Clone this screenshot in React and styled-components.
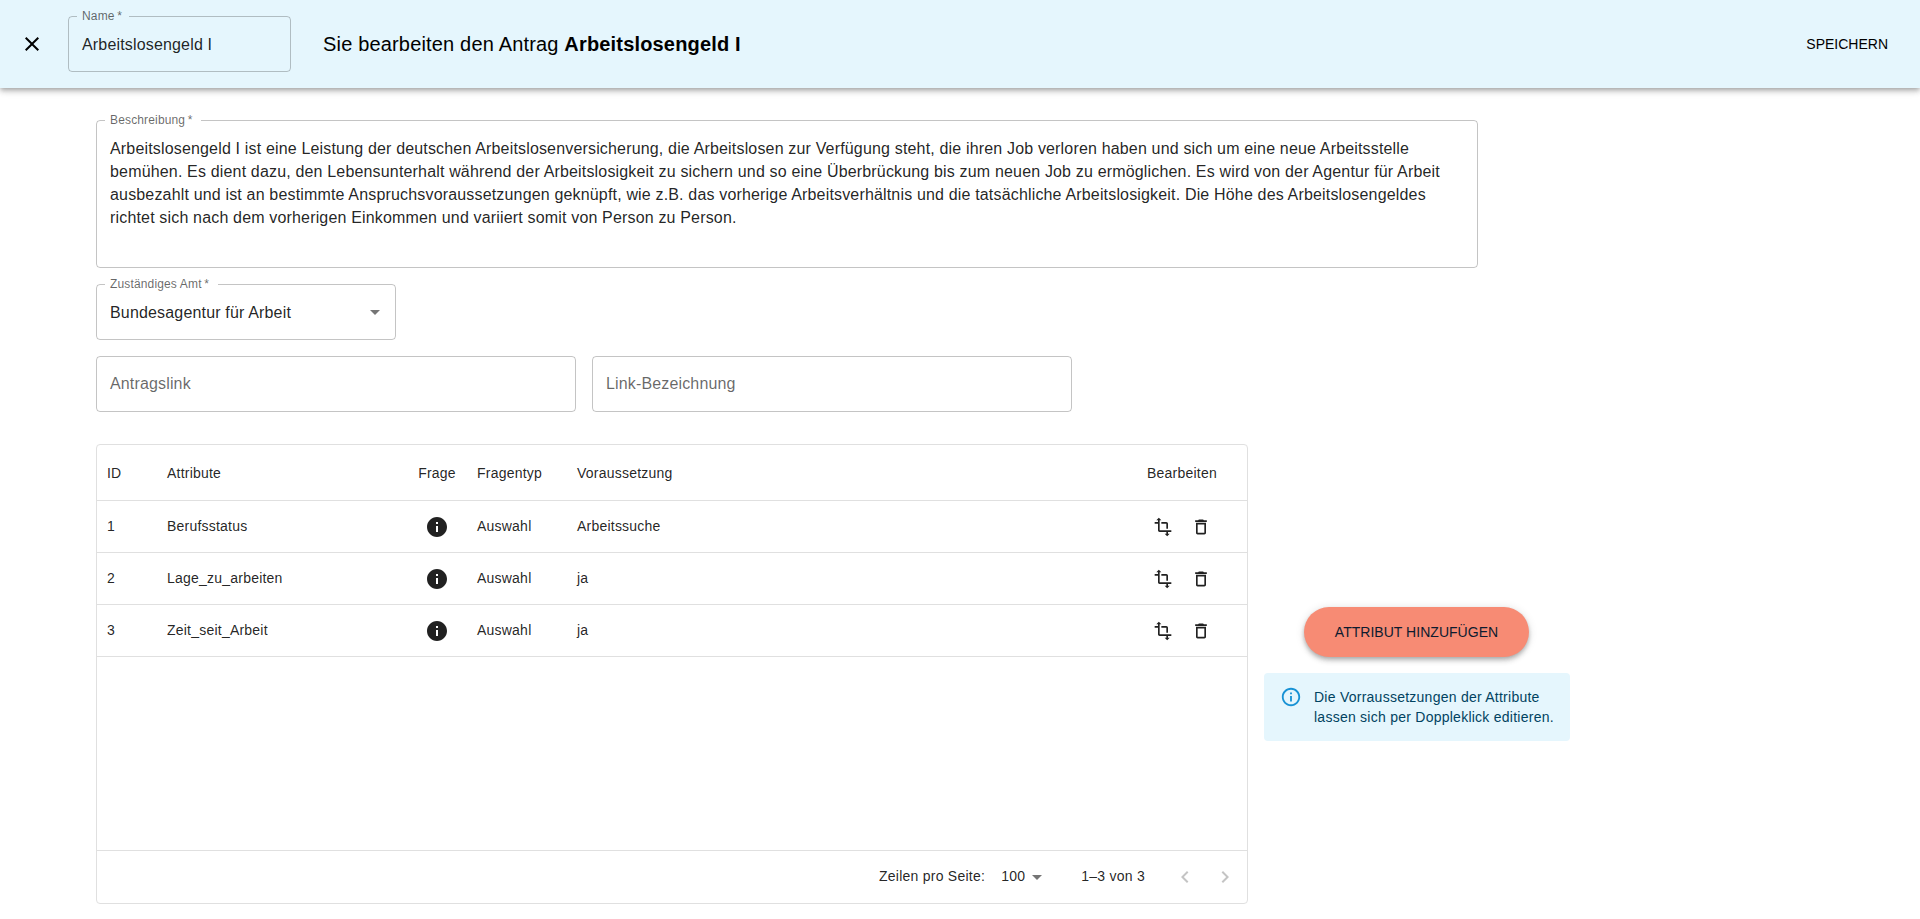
import React from 'react';
import styled, { createGlobalStyle } from 'styled-components';
import {
  MdClose,
  MdInfo,
  MdInfoOutline,
  MdTransform,
  MdDeleteOutline,
  MdArrowDropDown,
  MdKeyboardArrowLeft,
  MdKeyboardArrowRight,
} from 'react-icons/md';

const GlobalStyle = createGlobalStyle`
  * { box-sizing: border-box; }
  body {
    margin: 0;
    background: #fff;
    color: rgba(0, 0, 0, 0.87);
    font-family: "Liberation Sans", Arial, sans-serif;
    font-size: 14px;
  }
  svg { display: block; flex: none; }
`;

const Page = styled.div`
  min-height: 919px;
`;

const AppBar = styled.header`
  display: flex;
  align-items: center;
  height: 88px;
  padding: 0 24px 0 12px;
  background: #e5f6fd;
  color: #000;
  box-shadow: 0 2px 4px -1px rgba(0, 0, 0, 0.2), 0 4px 5px 0 rgba(0, 0, 0, 0.14),
    0 1px 10px 0 rgba(0, 0, 0, 0.12);
`;

const IconButton = styled.button`
  display: flex;
  align-items: center;
  justify-content: center;
  width: ${(p) => p.$size}px;
  height: ${(p) => p.$size}px;
  padding: 0;
  border: 0;
  border-radius: 50%;
  background: none;
  color: inherit;
  opacity: ${(p) => (p.disabled ? 0.26 : 1)};
`;

const Title = styled.h1`
  flex: 1;
  margin: 0 0 0 32px;
  font-size: 20px;
  font-weight: 400;
  line-height: 32px;
  letter-spacing: 0.172px;
`;

const SaveButton = styled.button`
  padding: 6px 8px;
  border: 0;
  background: none;
  color: #000;
  font: 14px/24.5px "Liberation Sans", Arial, sans-serif;
  letter-spacing: 0;
  text-transform: uppercase;
`;

/* Outlined box; the legend interrupts the top border around its centre line. */
const Outline = styled.fieldset`
  width: ${(p) => p.$width};
  height: ${(p) => p.$height + 5}px;
  min-width: 0;
  margin: -5px 0 0;
  padding: 0;
  border: 1px solid rgba(0, 0, 0, 0.23);
  border-radius: 4px;
  color: rgba(0, 0, 0, 0.87);
  font-size: 16px;
  line-height: 23px;
  letter-spacing: 0.167px;
`;

const Legend = styled.legend`
  width: ${(p) => p.$notch}px;
  height: 11px;
  margin-left: 8px;
  padding: 0 0 0 5px;
  color: rgba(0, 0, 0, 0.6);
  font-size: 12px;
  line-height: 11px;
  letter-spacing: 0.15px;
  white-space: nowrap;
`;

const Value = styled.div`
  display: flex;
  align-items: center;
  justify-content: space-between;
  padding: 10.5px 8px 0 13px;

  svg { margin: -1px 0 0; }
`;

const Paragraph = styled.p`
  margin: 0;
  padding: 10.5px 13px 0;
`;

const EmptyField = styled.div`
  width: 480px;
  height: 56px;
  padding: 15px 13px;
  border: 1px solid rgba(0, 0, 0, 0.23);
  border-radius: 4px;
  color: rgba(0, 0, 0, 0.6);
  font-size: 16px;
  line-height: 23px;
  letter-spacing: 0.00938em;
`;

const NameSlot = styled.div`
  margin-left: 16px;
`;

const Main = styled.main`
  display: flex;
  flex-direction: column;
  gap: 16px;
  padding: 32px 96px 0;
`;

const FieldRow = styled.div`
  display: flex;
  gap: 16px;
`;

const TableArea = styled.section`
  display: flex;
  align-items: center;
  gap: 16px;
  margin-top: 16px;
`;

const Grid = styled.div`
  display: flex;
  flex-direction: column;
  width: 1152px;
  height: 460px;
  border: 1px solid #e0e0e0;
  border-radius: 4px;
  line-height: 20px;
  letter-spacing: 0.22px;
`;

const Row = styled.div`
  display: grid;
  grid-template-columns: 60px 250px 60px 100px 570px 90px;
  align-items: center;
  height: ${(p) => (p.$header ? 56 : 52)}px;
  border-bottom: 1px solid #e0e0e0;
`;

const Cell = styled.div`
  display: flex;
  align-items: center;
  justify-content: ${(p) => (p.$center ? 'center' : 'flex-start')};
  gap: 8px;
  padding: ${(p) => (p.$center ? 0 : '0 10px')};
`;

const TextCell = styled(Cell)`
  padding-bottom: 2px;
`;

const Footer = styled.div`
  display: flex;
  align-items: center;
  justify-content: flex-end;
  height: 53px;
  margin-top: auto;
  padding-right: 2px;
  border-top: 1px solid #e0e0e0;
  letter-spacing: 0.25px;

  > span { padding-bottom: 2px; }
`;

const PageSize = styled.div`
  display: flex;
  align-items: center;
  margin: 0 32px 0 16px;

  > span { padding-bottom: 2px; }
  svg { color: rgba(0, 0, 0, 0.54); }
`;

const Pager = styled.div`
  display: flex;
  margin-left: 20px;
`;

const Side = styled.aside`
  display: flex;
  flex-direction: column;
  align-items: center;
  gap: 16px;
`;

const AddButton = styled.button`
  width: 225px;
  height: 50px;
  margin-right: 1px;
  padding: 0;
  border: 0;
  border-radius: 25px;
  background: #f78b74;
  color: #0d1b2f;
  font: 14px/24.5px "Liberation Sans", Arial, sans-serif;
  letter-spacing: 0.03px;
  text-transform: uppercase;
  box-shadow: 0 2px 4px -1px rgba(0, 0, 0, 0.2), 0 4px 5px 0 rgba(0, 0, 0, 0.14),
    0 1px 10px 0 rgba(0, 0, 0, 0.12);
`;

const Alert = styled.div`
  display: flex;
  width: 306px;
  padding: 14px 16px;
  border-radius: 4px;
  background: #e5f6fd;
  color: #014361;
  line-height: 20px;
  letter-spacing: 0.25px;
  white-space: nowrap;

  svg { margin: -1px 12px 0 0; color: #0288d1; opacity: 0.9; }
`;

const rows = [
  { id: 1, attribute: 'Berufsstatus', type: 'Auswahl', condition: 'Arbeitssuche' },
  { id: 2, attribute: 'Lage_zu_arbeiten', type: 'Auswahl', condition: 'ja' },
  { id: 3, attribute: 'Zeit_seit_Arbeit', type: 'Auswahl', condition: 'ja' },
];

export default function App() {
  return (
    <Page>
      <GlobalStyle />
      <AppBar>
        <IconButton $size={40} aria-label="Schließen"><MdClose size={24} /></IconButton>
        <NameSlot>
          <Outline $width="223px" $height={56}>
            <Legend $notch={52}>Name{'\u2009'}*</Legend>
            <Value>Arbeitslosengeld I</Value>
          </Outline>
        </NameSlot>
        <Title>Sie bearbeiten den Antrag <b>Arbeitslosengeld I</b></Title>
        <SaveButton>Speichern</SaveButton>
      </AppBar>
      <Main>
        <Outline $width="1382px" $height={148}>
          <Legend $notch={96}>Beschreibung{'\u2009'}*</Legend>
          <Paragraph>
            Arbeitslosengeld I ist eine Leistung der deutschen Arbeitslosenversicherung, die
            Arbeitslosen zur Verfügung steht, die ihren Job verloren haben und sich um eine neue
            Arbeitsstelle bemühen. Es dient dazu, den Lebensunterhalt während der Arbeitslosigkeit
            zu sichern und so eine Überbrückung bis zum neuen Job zu ermöglichen. Es wird von der
            Agentur für Arbeit ausbezahlt und ist an bestimmte Anspruchsvoraussetzungen geknüpft,
            wie z.B. das vorherige Arbeitsverhältnis und die tatsächliche Arbeitslosigkeit. Die
            Höhe des Arbeitslosengeldes richtet sich nach dem vorherigen Einkommen und variiert
            somit von Person zu Person.
          </Paragraph>
        </Outline>
        <Outline $width="300px" $height={56}>
          <Legend $notch={113}>Zuständiges Amt{'\u2009'}*</Legend>
          <Value>
            Bundesagentur für Arbeit
            <MdArrowDropDown size={24} color="rgba(0,0,0,0.54)" />
          </Value>
        </Outline>
        <FieldRow>
          <EmptyField>Antragslink</EmptyField>
          <EmptyField>Link-Bezeichnung</EmptyField>
        </FieldRow>
        <TableArea>
          <Grid>
            <Row $header>
              <Cell>ID</Cell>
              <Cell>Attribute</Cell>
              <Cell $center>Frage</Cell>
              <Cell>Fragentyp</Cell>
              <Cell>Voraussetzung</Cell>
              <Cell $center>Bearbeiten</Cell>
            </Row>
            {rows.map((row) => (
              <Row key={row.id}>
                <TextCell>{row.id}</TextCell>
                <TextCell>{row.attribute}</TextCell>
                <Cell $center><MdInfo size={24} /></Cell>
                <TextCell>{row.type}</TextCell>
                <TextCell>{row.condition}</TextCell>
                <Cell $center>
                  <IconButton $size={30} aria-label="Bearbeiten"><MdTransform size={20} /></IconButton>
                  <IconButton $size={30} aria-label="Löschen"><MdDeleteOutline size={20} /></IconButton>
                </Cell>
              </Row>
            ))}
            <Footer>
              <span>Zeilen pro Seite:</span>
              <PageSize><span>100</span><MdArrowDropDown size={24} /></PageSize>
              <span>1–3 von 3</span>
              <Pager>
                <IconButton $size={40} disabled aria-label="Zurück"><MdKeyboardArrowLeft size={24} /></IconButton>
                <IconButton $size={40} disabled aria-label="Weiter"><MdKeyboardArrowRight size={24} /></IconButton>
              </Pager>
            </Footer>
          </Grid>
          <Side>
            <AddButton>Attribut hinzufügen</AddButton>
            <Alert>
              <MdInfoOutline size={22} />
              <div>Die Vorraussetzungen der Attribute<br />lassen sich per Doppleklick editieren.</div>
            </Alert>
          </Side>
        </TableArea>
      </Main>
    </Page>
  );
}
